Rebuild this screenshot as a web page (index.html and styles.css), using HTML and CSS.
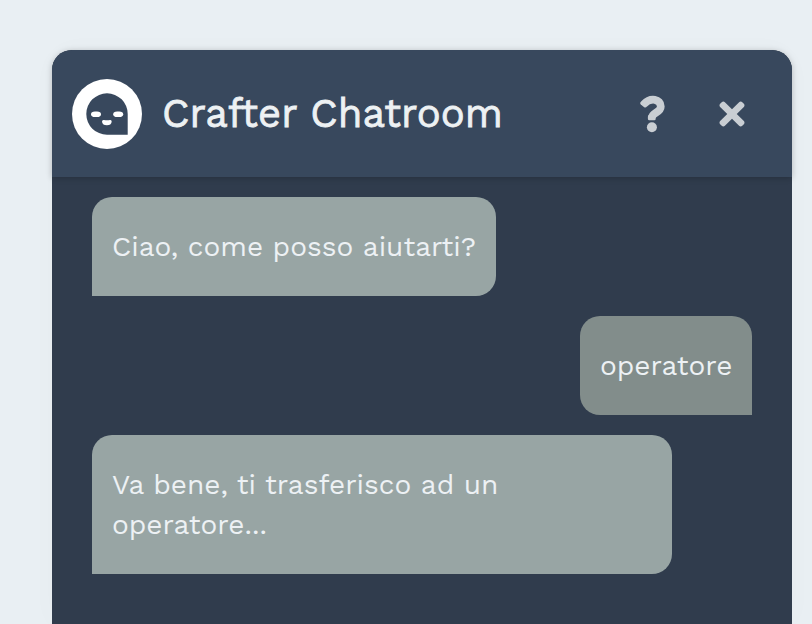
FILE: index.html
```html
<!DOCTYPE html>
<html lang="it">
<head>
<meta charset="utf-8">
<title>Crafter Chatroom</title>
<link rel="stylesheet" href="styles.css">
</head>
<body>
<main class="chat">
  <header class="chat-header">
    <svg class="avatar" viewBox="0 0 70 70" aria-hidden="true">
      <circle cx="35" cy="35" r="35" fill="#fff"/>
      <path d="M35 14.3a20.7 20.7 0 0 1 20.7 20.7v20.7H35a20.7 20.7 0 0 1 0-41.4z" fill="#38485d"/>
      <g fill="#fff">
        <rect x="19" y="32.4" width="10" height="5.6" rx="4" ry="2.8"/>
        <rect x="41.2" y="32.4" width="10" height="5.6" rx="4" ry="2.8"/>
        <path d="M30 42.8Q30 40.6 32 41Q35 41.6 38 41Q39.7 40.6 39.7 42.8Q39.2 46.3 34.9 46.3Q30.5 46.3 30 42.8z"/>
      </g>
    </svg>
    <h1 class="title">Crafter Chatroom</h1>
    <button class="action" aria-label="Aiuto">
      <svg width="26" height="38" viewBox="0 0 26 38">
        <path d="M4.9 9.2C11.6 1.9 21.8 4.2 21.8 11.4C21.8 18 12.8 17.2 12.8 23" fill="none" stroke="#c9ced3" stroke-width="7.7" stroke-linejoin="round"/>
        <path d="M1.6 7.1Q.5 8.5 1.8 9.6L5.2 12.2Q6.6 13.2 7.8 11.8L5.8 5z" fill="#c9ced3"/>
        <rect x="8.9" y="20.3" width="7.8" height="5" rx="1.4" fill="#c9ced3"/>
        <circle cx="12.9" cy="32.3" r="5" fill="#c9ced3"/>
      </svg>
    </button>
    <button class="action" aria-label="Chiudi">
      <svg width="26" height="26" viewBox="-7 -7 366 366" fill="#c9ced3">
        <path transform="translate(0 -80)" d="M242.72 256l100.07-100.07c12.28-12.28 12.28-32.19 0-44.48l-22.24-22.24c-12.28-12.28-32.19-12.28-44.48 0L176 189.28 75.93 89.21c-12.28-12.28-32.19-12.28-44.48 0L9.21 111.45c-12.28 12.28-12.28 32.19 0 44.48L109.28 256 9.21 356.07c-12.28 12.28-12.28 32.19 0 44.48l22.24 22.24c12.28 12.28 32.2 12.28 44.48 0L176 322.72l100.07 100.07c12.28 12.28 32.2 12.28 44.48 0l22.24-22.24c12.28-12.28 12.28-32.19 0-44.48L242.72 256z"/>
      </svg>
    </button>
  </header>
  <section class="messages">
    <p class="bubble bot greeting">Ciao, come posso aiutarti?</p>
    <p class="bubble user">operatore</p>
    <p class="bubble bot transfer">Va bene, ti trasferisco ad un operatore...</p>
  </section>
</main>
</body>
</html>
```
FILE: styles.css
```css
* { box-sizing: border-box; }

body {
  margin: 0;
  height: 624px;
  padding: 50px 20px 0 52px;
  overflow: hidden;
  background: #e9eff3;
  font-family: "Work Sans", Inter, "Liberation Sans", sans-serif;
}

.chat {
  height: 574px;
  border-radius: 20px 20px 0 0;
  background: #303c4d;
  box-shadow: 0 0 30px rgba(48, 60, 77, .02);
}

.chat-header {
  position: relative;
  display: flex;
  align-items: center;
  height: 127px;
  padding: 0 20px;
  border-radius: 20px 20px 0 0;
  background: #38485d;
  box-shadow: 0 1px 6px rgba(0, 0, 0, .22);
}

.avatar {
  width: 70px;
  height: 70px;
  flex: none;
}

.title {
  flex: 1;
  margin: 0 0 0 20px;
  padding-top: 1px;
  color: #edf1f3;
  font-size: 40px;
  font-weight: 400;
  -webkit-text-stroke: .8px #edf1f3;
  line-height: 48px;
  white-space: nowrap;
}

.action {
  display: grid;
  place-items: center;
  width: 80px;
  height: 80px;
  padding: 0;
  border: 0;
  background: none;
}

.messages {
  display: flex;
  flex-direction: column;
  align-items: flex-start;
  gap: 20px;
  padding: 20px 40px;
}

.bubble {
  margin: 0;
  padding: 30px 20px 29px;
  border-radius: 20px;
  color: #edf1f4;
  font-size: 28px;
  font-weight: 400;
  line-height: 40px;
}

.bot {
  background: #98a5a4;
  border-bottom-left-radius: 0;
}

.greeting {
  width: 404px;
  white-space: nowrap;
}

.transfer { width: 580px; }

.user {
  align-self: flex-end;
  width: 172px;
  background: #828d8b;
  border-bottom-right-radius: 0;
}
```
